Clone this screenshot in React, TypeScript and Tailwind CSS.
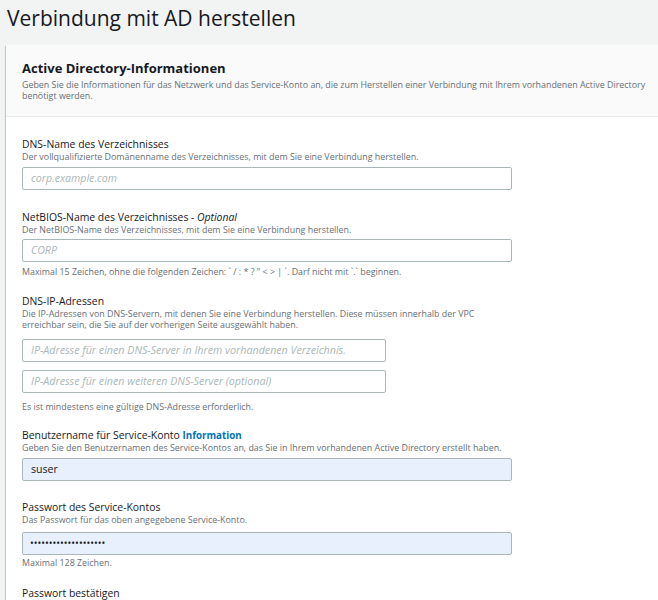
import React from "react";

const font = { fontFamily: '"Open Sans", "Noto Sans", sans-serif' };

function Label({ children, mt }: { children: React.ReactNode; mt: string }) {
  return (
    <div className={`${mt} text-[10.4px] leading-[13px] text-[#16191f]`}>{children}</div>
  );
}

function Desc({ children }: { children: React.ReactNode }) {
  return <div className="text-[8.9px] leading-[11px] text-[#687078]">{children}</div>;
}

export default function App() {
  return (
    <div className="min-h-[600px] bg-[#f2f3f3] overflow-hidden" style={font}>
      <div className="h-[45px] pl-[7px] pt-[4px]">
        <h1 className="text-[21px] leading-[28px] text-[#16191f] font-normal">
          Verbindung mit AD herstellen
        </h1>
      </div>
      <div className="ml-[6px] bg-white shadow-[0_1px_1px_0_rgba(0,28,36,0.3),1px_1px_1px_0_rgba(0,28,36,0.15),-1px_1px_1px_0_rgba(0,28,36,0.15)] min-h-[560px]">
        <div className="h-[72px] bg-[#fafafa] border-b border-[#eaeded] pl-[16px] pr-[2px] pt-[15px]">
          <div className="text-[13px] leading-[16px] font-bold text-[#16191f]">
            Active Directory-Informationen
          </div>
          <div className="mt-[3px] text-[8.9px] leading-[11px] text-[#687078]">
            Geben Sie die Informationen für das Netzwerk und das Service-Konto an, die zum Herstellen einer Verbindung mit Ihrem vorhandenen Active Directory benötigt werden.
          </div>
        </div>
        <div className="px-[16px] pt-[21px]">
          <Label mt="mt-0">DNS-Name des Verzeichnisses</Label>
          <Desc>Der vollqualifizierte Domänenname des Verzeichnisses, mit dem Sie eine Verbindung herstellen.</Desc>
          <div className="mt-[5px] h-[23px] w-[490px] rounded-[2px] border border-[#aab7b8] bg-white pl-[8px] flex items-center text-[10.6px] italic text-[#aab7b8]">
            corp.example.com
          </div>

          <Label mt="mt-[21px]">
            NetBIOS-Name des Verzeichnisses - <span className="italic">Optional</span>
          </Label>
          <Desc>Der NetBIOS-Name des Verzeichnisses, mit dem Sie eine Verbindung herstellen.</Desc>
          <div className="mt-[4px] h-[23px] w-[490px] rounded-[2px] border border-[#aab7b8] bg-white pl-[8px] flex items-center text-[10.6px] italic text-[#aab7b8]">
            CORP
          </div>
          <div className="mt-[4px] text-[8.9px] leading-[11px] text-[#687078]">
            Maximal 15 Zeichen, ohne die folgenden Zeichen: ` / : * ? " &lt; &gt; | `. Darf nicht mit `.` beginnen.
          </div>

          <Label mt="mt-[18px]">DNS-IP-Adressen</Label>
          <div className="w-[490px]">
            <Desc>
              Die IP-Adressen von DNS-Servern, mit denen Sie eine Verbindung herstellen. Diese müssen innerhalb der VPC erreichbar sein, die Sie auf der vorherigen Seite ausgewählt haben.
            </Desc>
          </div>
          <div className="mt-[9px] h-[23px] w-[364px] rounded-[2px] border border-[#aab7b8] bg-white pl-[8px] flex items-center text-[10.7px] italic text-[#aab7b8] whitespace-nowrap overflow-hidden">
            IP-Adresse für einen DNS-Server in Ihrem vorhandenen Verzeichnis.
          </div>
          <div className="mt-[8px] h-[23px] w-[364px] rounded-[2px] border border-[#aab7b8] bg-white pl-[8px] flex items-center text-[10.7px] italic text-[#aab7b8] whitespace-nowrap overflow-hidden">
            IP-Adresse für einen weiteren DNS-Server (optional)
          </div>
          <div className="mt-[8px] text-[8.9px] leading-[11px] text-[#687078]">
            Es ist mindestens eine gültige DNS-Adresse erforderlich.
          </div>

          <Label mt="mt-[17px]">
            Benutzername für Service-Konto{" "}
            <span className="font-bold text-[#0073bb] text-[9.8px]">Information</span>
          </Label>
          <Desc>Geben Sie den Benutzernamen des Service-Kontos an, das Sie in Ihrem vorhandenen Active Directory erstellt haben.</Desc>
          <div className="mt-[5px] h-[23px] w-[490px] rounded-[2px] border border-[#aab7b8] bg-[#e8f0fe] pl-[8px] flex items-center text-[10.6px] text-[#16191f]">
            suser
          </div>

          <Label mt="mt-[20px]">Passwort des Service-Kontos</Label>
          <Desc>Das Passwort für das oben angegebene Service-Konto.</Desc>
          <div className="mt-[7px] h-[23px] w-[490px] rounded-[2px] border border-[#aab7b8] bg-[#e8f0fe] pl-[7px] flex items-center text-[10px] text-[#16191f]">
            ••••••••••••••••••••
          </div>
          <div className="mt-[2px] text-[8.9px] leading-[11px] text-[#687078]">Maximal 128 Zeichen.</div>

          <Label mt="mt-[19px]">Passwort bestätigen</Label>
        </div>
      </div>
    </div>
  );
}
